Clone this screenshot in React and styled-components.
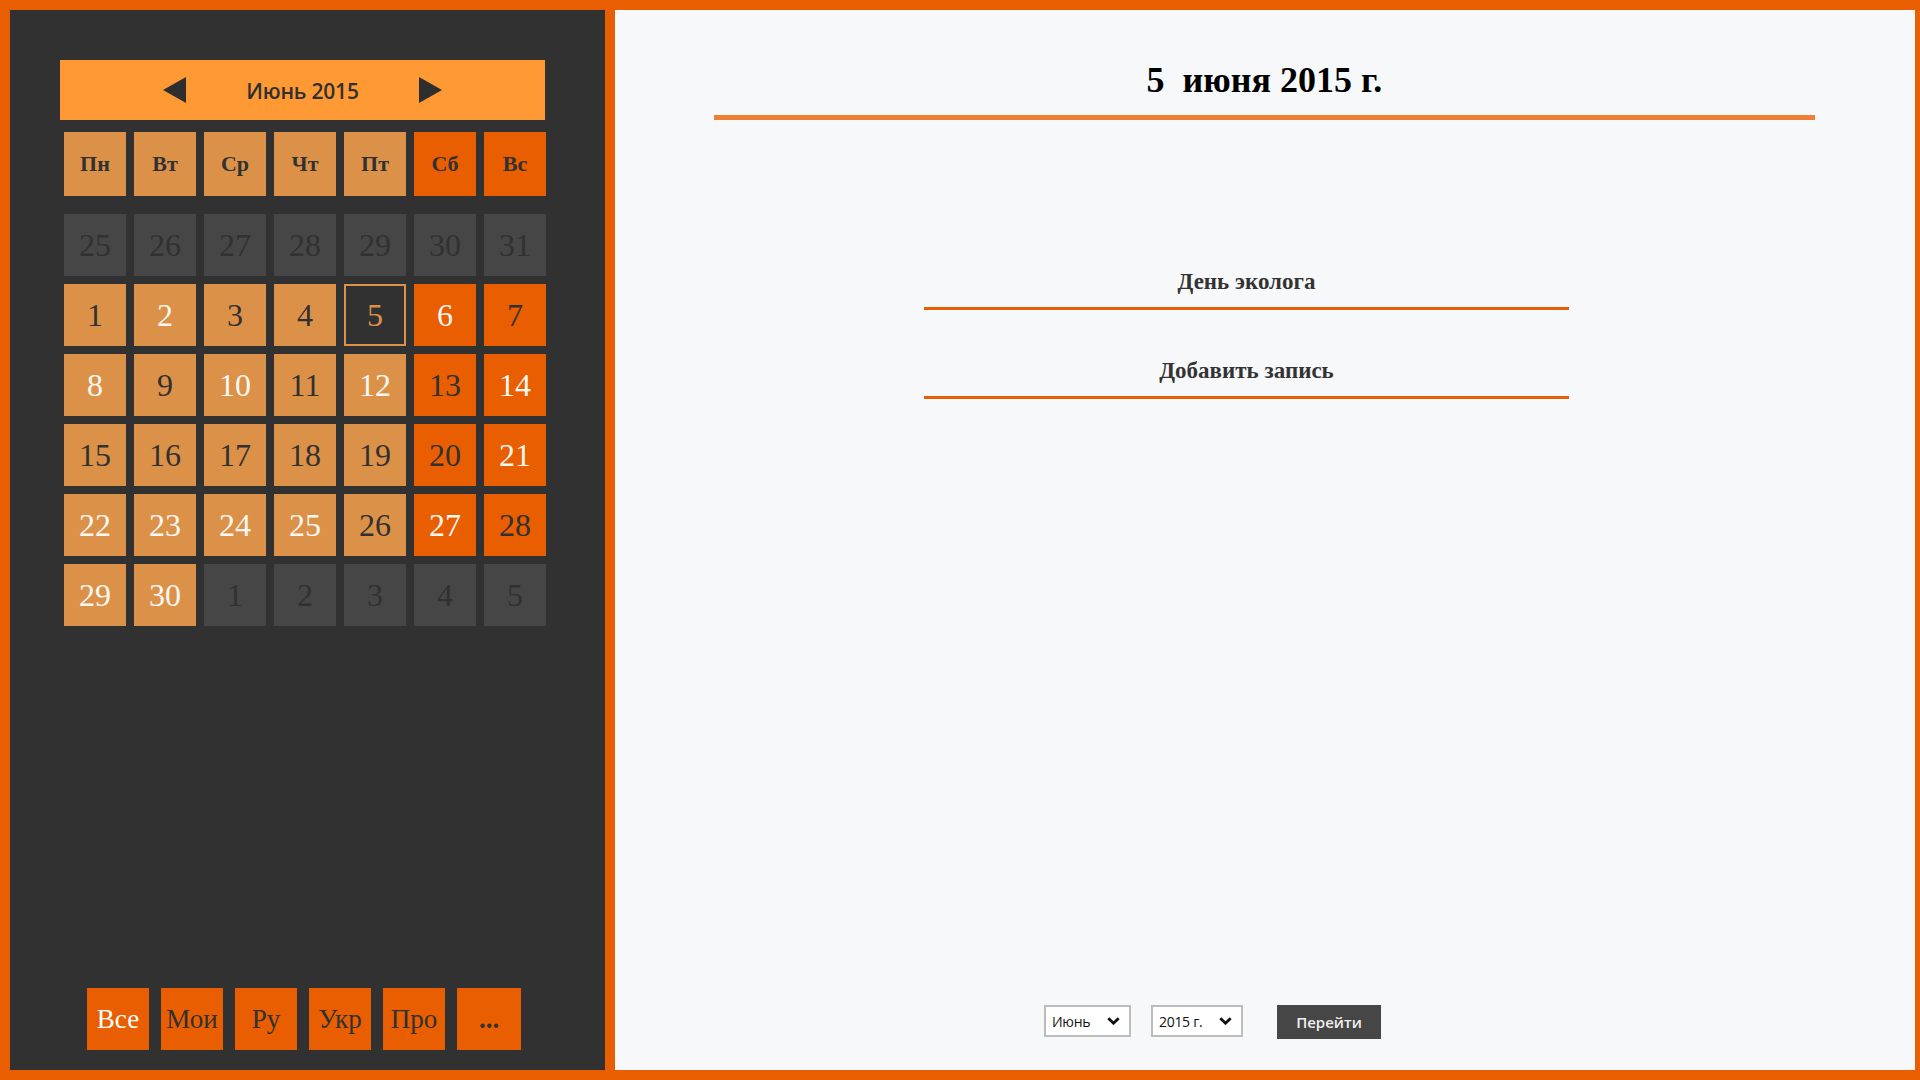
import React from "react";
import styled, { createGlobalStyle } from "styled-components";

const GlobalStyle = createGlobalStyle`
  html, body {
    margin: 0;
    padding: 0;
    background: #e95e00;
  }
  * {
    box-sizing: border-box;
  }
`;

const Page = styled.div`
  display: flex;
  gap: 10px;
  width: 1920px;
  height: 1080px;
  padding: 10px 5px 10px 10px;
  background: #e95e00;
`;

const Sidebar = styled.aside`
  display: flex;
  flex-direction: column;
  width: 595px;
  flex-shrink: 0;
  padding-top: 50px;
  background: #313131;
`;

const MonthBar = styled.div`
  display: flex;
  align-items: center;
  justify-content: center;
  gap: 60px;
  width: 485px;
  height: 60px;
  margin-left: 50px;
  background: #ff9933;
`;

const MonthTitle = styled.span`
  font-family: "Open Sans", "Noto Sans", sans-serif;
  font-size: 21px;
  font-weight: 600;
  letter-spacing: -0.2px;
  color: #303030;
  padding-top: 2px;
`;

const ArrowButton = styled.button`
  display: flex;
  padding: 0;
  border: none;
  background: none;
  cursor: pointer;
`;

const Grid = styled.div`
  display: grid;
  grid-template-columns: repeat(7, 62px);
  grid-auto-rows: ${(p) => p.$rowHeight}px;
  gap: 8px;
  width: 482px;
  margin-left: 54px;
  margin-top: ${(p) => p.$top}px;
`;

const cellBg = {
  weekday: "#dc9148",
  weekend: "#e95e00",
  other: "#464646",
  selected: "#313131",
};

const Cell = styled.div`
  display: flex;
  align-items: center;
  justify-content: center;
  background: ${(p) => cellBg[p.$kind]};
  border: ${(p) => (p.$kind === "selected" ? "2px solid #dc9148" : "none")};
  font-family: "Liberation Serif", "Times New Roman", serif;
  font-size: ${(p) => (p.$head ? "22px" : "32px")};
  font-weight: ${(p) => (p.$head ? 700 : 400)};
  color: ${(p) =>
    p.$kind === "selected" ? "#dc9148" : p.$light ? "#fbf7f2" : "#313131"};
`;

const Filters = styled.div`
  display: flex;
  gap: 12px;
  margin-top: auto;
  padding: 0 0 20px 77px;
`;

const FilterButton = styled.button`
  width: ${(p) => (p.$wide ? 64 : 62)}px;
  height: 62px;
  padding: 0;
  border: none;
  background: #e95e00;
  font-family: "Liberation Serif", "Times New Roman", serif;
  font-size: 27px;
  font-weight: ${(p) => (p.$wide ? 700 : 400)};
  color: ${(p) => (p.$light ? "#ffffff" : "#313131")};
  cursor: pointer;
`;

const Main = styled.main`
  display: flex;
  flex-direction: column;
  flex: 1;
  background: #f7f8fa;
`;

const DayTitle = styled.h1`
  margin: 0 100px 0 99px;
  padding: 50px 0 15px;
  border-bottom: 5px solid #ef7f33;
  font-family: "Liberation Serif", "Times New Roman", serif;
  font-size: 36px;
  line-height: 40px;
  font-weight: 700;
  text-align: center;
  white-space: pre;
  color: #000;
`;

const EventList = styled.div`
  display: flex;
  flex-direction: column;
  gap: 48px;
  width: 645px;
  margin: 149px 0 0 309px;
`;

const EventItem = styled.div`
  padding-bottom: 12px;
  border-bottom: 3px solid #e95e00;
  font-family: "Liberation Serif", "Times New Roman", serif;
  font-size: 23px;
  line-height: 26px;
  font-weight: 700;
  text-align: center;
  color: #333;
  cursor: pointer;
`;

const Controls = styled.div`
  display: flex;
  align-items: flex-start;
  margin-top: auto;
  padding: 0 0 31px 429px;
`;

const Select = styled.div`
  display: flex;
  align-items: center;
  justify-content: space-between;
  width: ${(p) => p.$width}px;
  height: 32px;
  margin-right: ${(p) => p.$gap}px;
  padding: 0 9px 0 6px;
  border: 2px solid #bcbcbc;
  background: #fff;
  font-family: "Open Sans", "Noto Sans", sans-serif;
  font-size: 14px;
  letter-spacing: -0.3px;
  color: #111;
`;

const GoButton = styled.button`
  width: 104px;
  height: 34px;
  border: none;
  background: #464646;
  font-family: "Open Sans", "Noto Sans", sans-serif;
  font-size: 15px;
  font-weight: 600;
  color: #f0f0f0;
  cursor: pointer;
`;

const Triangle = ({ dir }) => (
  <svg width="23" height="26" viewBox="0 0 23 26">
    <polygon
      points={dir === "left" ? "23,0 23,26 0,13" : "0,0 0,26 23,13"}
      fill="#2e2e2e"
    />
  </svg>
);

const Chevron = () => (
  <svg width="13" height="8" viewBox="0 0 13 8">
    <polyline
      points="1.3,1.3 6.5,6.2 11.7,1.3"
      fill="none"
      stroke="#111"
      strokeWidth="2.8"
    />
  </svg>
);

const weekdays = ["Пн", "Вт", "Ср", "Чт", "Пт", "Сб", "Вс"];
const lightDays = [2, 6, 8, 10, 12, 14, 21, 22, 23, 24, 25, 27, 29, 30];

const days = [
  ...[25, 26, 27, 28, 29, 30, 31].map((d) => ({ d, other: true })),
  ...Array.from({ length: 30 }, (_, i) => ({ d: i + 1 })),
  ...[1, 2, 3, 4, 5].map((d) => ({ d, other: true })),
];

const filters = ["Все", "Мои", "Ру", "Укр", "Про", "..."];

export default function App() {
  return (
    <>
      <GlobalStyle />
      <Page>
        <Sidebar>
          <MonthBar>
            <ArrowButton>
              <Triangle dir="left" />
            </ArrowButton>
            <MonthTitle>Июнь 2015</MonthTitle>
            <ArrowButton>
              <Triangle dir="right" />
            </ArrowButton>
          </MonthBar>

          <Grid $rowHeight={64} $top={12}>
            {weekdays.map((w, i) => (
              <Cell key={w} $head $kind={i > 4 ? "weekend" : "weekday"}>
                {w}
              </Cell>
            ))}
          </Grid>

          <Grid $rowHeight={62} $top={18}>
            {days.map((item, i) => {
              let kind = "weekday";
              if (item.other) kind = "other";
              else if (item.d === 5) kind = "selected";
              else if (i % 7 > 4) kind = "weekend";
              return (
                <Cell
                  key={i}
                  $kind={kind}
                  $light={!item.other && lightDays.includes(item.d)}
                >
                  {item.d}
                </Cell>
              );
            })}
          </Grid>

          <Filters>
            {filters.map((f, i) => (
              <FilterButton key={f} $light={i === 0} $wide={f === "..."}>
                {f}
              </FilterButton>
            ))}
          </Filters>
        </Sidebar>

        <Main>
          <DayTitle>{"5  июня 2015 г."}</DayTitle>

          <EventList>
            <EventItem>День эколога</EventItem>
            <EventItem>Добавить запись</EventItem>
          </EventList>

          <Controls>
            <Select $width={87} $gap={20}>
              Июнь
              <Chevron />
            </Select>
            <Select $width={92} $gap={34}>
              2015 г.
              <Chevron />
            </Select>
            <GoButton>Перейти</GoButton>
          </Controls>
        </Main>
      </Page>
    </>
  );
}
